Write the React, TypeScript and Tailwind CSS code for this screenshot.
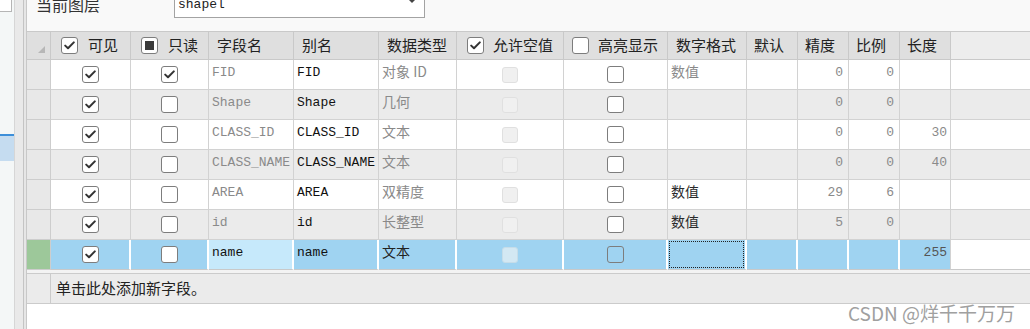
import React from 'react';

// --- Ma'lumotlar ---
type Row = {
  visible: boolean;
  readonly: boolean;
  name: string;
  alias: string;
  type: string;
  fmt: string;
  fmtDark?: boolean;
  precision: string;
  scale: string;
  length: string;
};

const rows: Row[] = [
  { visible: true, readonly: true, name: 'FID', alias: 'FID', type: '对象 ID', fmt: '数值', precision: '0', scale: '0', length: '' },
  { visible: true, readonly: false, name: 'Shape', alias: 'Shape', type: '几何', fmt: '', precision: '0', scale: '0', length: '' },
  { visible: true, readonly: false, name: 'CLASS_ID', alias: 'CLASS_ID', type: '文本', fmt: '', precision: '0', scale: '0', length: '30' },
  { visible: true, readonly: false, name: 'CLASS_NAME', alias: 'CLASS_NAME', type: '文本', fmt: '', precision: '0', scale: '0', length: '40' },
  { visible: true, readonly: false, name: 'AREA', alias: 'AREA', type: '双精度', fmt: '数值', fmtDark: true, precision: '29', scale: '6', length: '' },
  { visible: true, readonly: false, name: 'id', alias: 'id', type: '长整型', fmt: '数值', fmtDark: true, precision: '5', scale: '0', length: '' },
];

const GRID = 'grid grid-cols-[24px_80px_78px_85px_85px_78px_107px_104px_79px_51px_51px_51px_51px_1fr]';
const MONO = "font-['Liberation_Mono','Noto_Sans_CJK_SC',monospace]";
const CJK = "font-['Noto_Sans_CJK_SC','Noto_Sans',sans-serif]";

// Belgilash katakchasi
const Check = ({ checked, disabled, mixed }: { checked?: boolean; disabled?: boolean; mixed?: boolean }) => {
  if (disabled) {
    return <div className="w-[16px] h-[16px] rounded-[3px] border border-[#e0e0e0] bg-[#f0f0f0]" />;
  }
  return (
    <div className="w-[17px] h-[17px] rounded-[3px] border border-[#7d7d7d] bg-white flex items-center justify-center">
      {checked && (
        <svg width="11" height="9" viewBox="0 0 11 9">
          <path d="M1.2 4.6 L4 7.3 L9.8 1.4" fill="none" stroke="#333" strokeWidth="2" strokeLinecap="round" strokeLinejoin="round" />
        </svg>
      )}
      {mixed && <div className="w-[9px] h-[9px] bg-[#3a3a3a]" />}
    </div>
  );
};

const HeadCell = ({ children, className = '' }: { children?: React.ReactNode; className?: string }) => (
  <div className={`h-full flex items-center border-r border-[#c9c9c9] text-[15px] text-[#222] ${CJK} ${className}`}>
    {children}
  </div>
);

export default function App() {
  return (
    <div className="w-[1030px] h-[329px] overflow-hidden bg-white flex relative">
      {/* Chap panel */}
      <div className="w-[15px] h-full bg-[#f4f7f7] border-r border-[#d6d6d6] flex flex-col">
        <div className="w-[12px] h-[12px] bg-white border-r border-b border-[#b5b5b5]" />
        <div className="mt-[122px] w-[14px] h-[27px] bg-[#c5dcf0] border-t-2 border-[#3d8fd9]" />
      </div>
      <div className="w-[9px] h-full bg-[#e9e9e9] border-r border-[#c4c4c4]" />
      <div className="w-[2px] h-full bg-[#e6e6e6]" />

      {/* Asosiy qism */}
      <div className="flex-1 h-full flex flex-col border-l border-[#c8c8c8]">
        <div className="h-[31px] bg-[#f9f9f9] relative flex">
          <span className={`absolute left-[9px] top-[-8px] text-[16px] text-[#333] ${CJK}`}>当前图层</span>
          <div className="absolute left-[147px] top-[-2px] w-[251px] h-[20px] bg-white border border-[#a3a3a3] flex items-center">
            <span className={`ml-[3px] mt-[-6px] text-[13px] text-[#222] ${MONO}`}>shapel</span>
            <span className="absolute right-[8px] top-[0px] w-0 h-0 border-l-[4px] border-r-[4px] border-t-[4px] border-l-transparent border-r-transparent border-t-[#444]" />
          </div>
        </div>

        {/* Sarlavha */}
        <div className={`${GRID} h-[29px] bg-[#dfdfdf] border-t border-b border-[#c9c9c9]`}>
          <HeadCell className="justify-end items-end pr-[5px] pb-[6px]">
            <span className="w-0 h-0 border-l-[7px] border-l-transparent [border-bottom:7px_solid_#b7b7b7]" />
          </HeadCell>
          <HeadCell className="pl-[10px] gap-[10px]"><Check checked /> 可见</HeadCell>
          <HeadCell className="pl-[10px] gap-[10px]"><Check mixed /> 只读</HeadCell>
          <HeadCell className="pl-[8px]">字段名</HeadCell>
          <HeadCell className="pl-[8px]">别名</HeadCell>
          <HeadCell className="pl-[8px]">数据类型</HeadCell>
          <HeadCell className="pl-[10px] gap-[9px]"><Check checked /> 允许空值</HeadCell>
          <HeadCell className="pl-[8px] gap-[9px]"><Check /> 高亮显示</HeadCell>
          <HeadCell className="pl-[8px]">数字格式</HeadCell>
          <HeadCell className="pl-[7px]">默认</HeadCell>
          <HeadCell className="pl-[7px]">精度</HeadCell>
          <HeadCell className="pl-[7px]">比例</HeadCell>
          <HeadCell className="pl-[7px]">长度</HeadCell>
          <div className="h-full bg-[#ededed]" />
        </div>

        {/* Qatorlar */}
        {rows.map((r, i) => {
          const bg = i % 2 === 0 ? 'bg-white' : 'bg-[#ebebeb]';
          const cell = `h-full border-r border-b border-[#d2d2d2] ${bg}`;
          return (
            <div key={r.name} className={`${GRID} h-[30px]`}>
              <div className="h-full bg-[#e8e8e8] border-r border-b border-[#cdcdcd]" />
              <div className={`${cell} flex items-center justify-center`}><Check checked={r.visible} /></div>
              <div className={`${cell} flex items-center justify-center`}><Check checked={r.readonly} /></div>
              <div className={`${cell} pl-[3px] pt-[3px] text-[13px] text-[#8a8a8a] ${MONO} whitespace-nowrap overflow-hidden`}>{r.name}</div>
              <div className={`${cell} pl-[3px] pt-[3px] text-[13px] text-[#111] ${MONO} whitespace-nowrap overflow-hidden`}>{r.alias}</div>
              <div className={`${cell} pl-[3px] pt-[1px] text-[14px] text-[#8a8a8a] ${CJK} whitespace-nowrap`}>{r.type}</div>
              <div className={`${cell} flex items-center justify-center`}><Check disabled /></div>
              <div className={`${cell} flex items-center justify-center`}><Check /></div>
              <div className={`${cell} pl-[3px] pt-[1px] text-[14px] ${r.fmtDark ? 'text-[#2a2a2a]' : 'text-[#8a8a8a]'} ${CJK}`}>{r.fmt}</div>
              <div className={cell} />
              <div className={`${cell} text-right pr-[5px] pt-[3px] text-[13px] text-[#8a8a8a] ${MONO}`}>{r.precision}</div>
              <div className={`${cell} text-right pr-[5px] pt-[3px] text-[13px] text-[#8a8a8a] ${MONO}`}>{r.scale}</div>
              <div className={`${cell} text-right pr-[3px] pt-[3px] text-[13px] text-[#8a8a8a] ${MONO}`}>{r.length}</div>
              <div className={`h-full border-b border-[#d2d2d2] ${bg}`} />
            </div>
          );
        })}

        {/* Tanlangan qator */}
        <div className={`${GRID} h-[30px]`}>
          <div className="h-full bg-[#9dc89a] border-r border-b border-[#cdcdcd]" />
          <div className="h-full bg-[#9fd3f1] border-r-2 border-b border-r-white border-b-[#c9c9c9] flex items-center justify-center"><Check checked /></div>
          <div className="h-full bg-[#9fd3f1] border-r-2 border-b border-r-white border-b-[#c9c9c9] flex items-center justify-center"><Check /></div>
          <div className={`h-full bg-[#c6e9fb] border-r-2 border-b border-r-white border-b-[#c9c9c9] pl-[3px] pt-[3px] text-[13px] text-[#111] ${MONO}`}>name</div>
          <div className={`h-full bg-[#9fd3f1] border-r-2 border-b border-r-white border-b-[#c9c9c9] pl-[3px] pt-[3px] text-[13px] text-[#111] ${MONO}`}>name</div>
          <div className={`h-full bg-[#9fd3f1] border-r-2 border-b border-r-white border-b-[#c9c9c9] pl-[3px] pt-[1px] text-[14px] text-[#222] ${CJK}`}>文本</div>
          <div className="h-full bg-[#9fd3f1] border-r-2 border-b border-r-white border-b-[#c9c9c9] flex items-center justify-center">
            <div className="w-[16px] h-[16px] rounded-[3px] border border-[#c6dde9] bg-[#d3e8f3]" />
          </div>
          <div className="h-full bg-[#9fd3f1] border-r-2 border-b border-r-white border-b-[#c9c9c9] flex items-center justify-center"><div className="w-[17px] h-[17px] rounded-[3px] border border-[#7d7d7d] bg-[#9fd3f1]" /></div>
          <div className="h-full bg-[#9fd3f1] border-r-2 border-b border-r-white border-b-[#c9c9c9] p-[1px]">
            <div className="w-full h-full border border-dotted border-[#222]" />
          </div>
          <div className="h-full bg-[#9fd3f1] border-r-2 border-b border-r-white border-b-[#c9c9c9]" />
          <div className="h-full bg-[#9fd3f1] border-r-2 border-b border-r-white border-b-[#c9c9c9]" />
          <div className="h-full bg-[#9fd3f1] border-r-2 border-b border-r-white border-b-[#c9c9c9]" />
          <div className={`h-full bg-[#9fd3f1] border-r border-b border-r-[#d2d2d2] border-b-[#c9c9c9] text-right pr-[3px] pt-[3px] text-[13px] text-[#555] ${MONO}`}>255</div>
          <div className="h-full bg-white border-b border-[#c9c9c9]" />
        </div>

        {/* Yangi maydon qo'shish */}
        <div className="h-[3px] bg-[#f3f3f3]" />
        <div className="h-[31px] flex bg-[#ebebeb] border-t border-b border-[#cbcbcb]">
          <div className="w-[24px] h-full border-r border-[#cbcbcb]" />
          <div className={`pl-[5px] pt-[3px] text-[15px] text-[#222] ${CJK}`}>单击此处添加新字段。</div>
        </div>
        <div className="flex-1 bg-white" />
      </div>

      {/* Suv belgisi */}
      <div className={`absolute right-[15px] bottom-[4px] text-[19px] leading-[24px] text-[#a0a0a0] ${CJK}`}>CSDN @烊千千万万</div>
    </div>
  );
}
